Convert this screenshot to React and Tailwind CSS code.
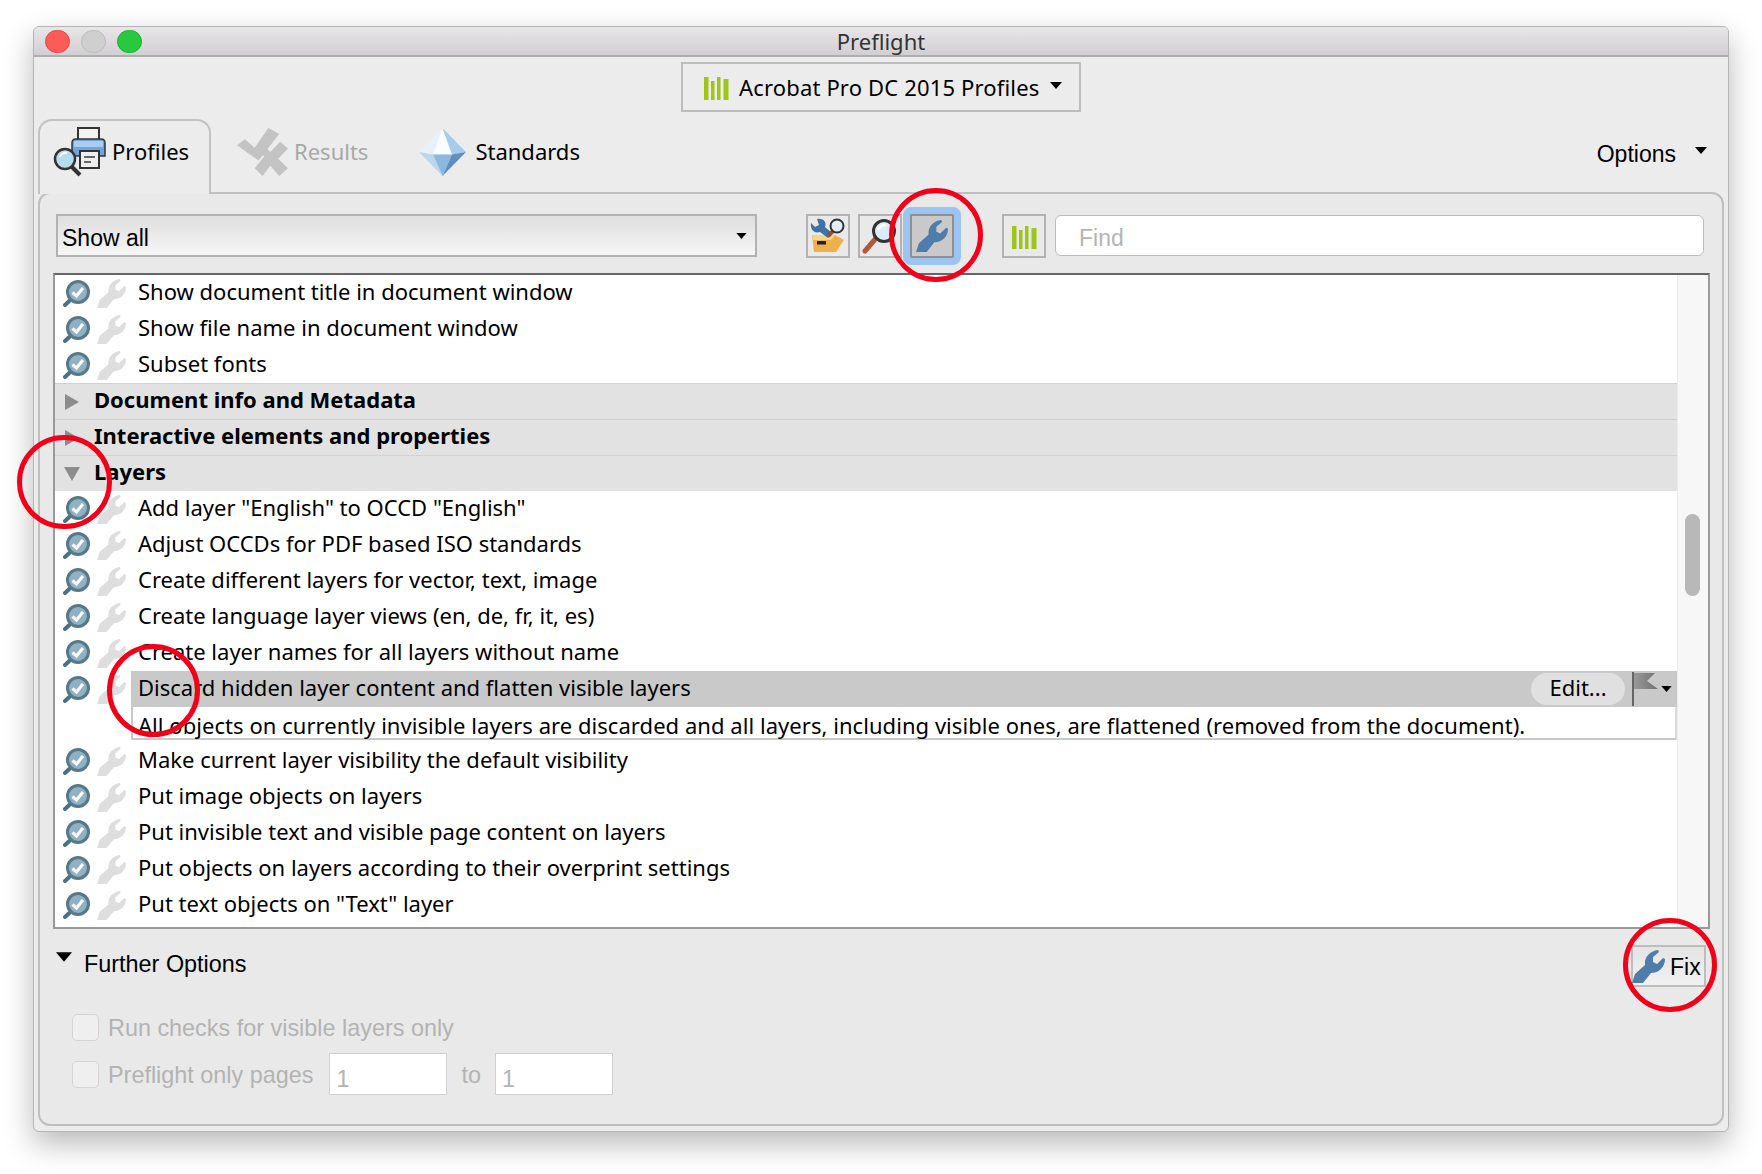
import React from 'react';

const WRENCH = 'M0 33 L3 24 L13 15 C12 7 18 1 26 0 L27 2 L21 7 L21 12 L25 14 L31 8 L33 9 C33 17 27 23 19 23 L11 33 Z';

const Wrench = ({ className, fill }) => (
  <svg viewBox="0 0 33 33" className={className}><path d={WRENCH} fill={fill} /></svg>
);

const Caret = ({ className }) => (
  <svg viewBox="0 0 12 7" className={className}><path d="M0 0 H12 L6 7 Z" fill="#000" /></svg>
);

const CheckGlass = () => (
  <svg viewBox="0 0 27 27" className="w-[27px] h-[27px] shrink-0">
    <path d="M2 25 L8.5 19" stroke="#4a7186" strokeWidth="4" strokeLinecap="round" />
    <circle cx="15" cy="12" r="10.5" fill="#8fb1c3" stroke="#567888" strokeWidth="3" />
    <path d="M9.5 12.5 L13.5 16 L20 8" fill="none" stroke="#fff" strokeWidth="3" />
  </svg>
);

const Bars = ({ className }) => (
  <svg viewBox="0 0 25 25" className={className} fill="#9fc518">
    <rect x="0" y="2" width="4.5" height="23" />
    <rect x="7" y="6" width="3.5" height="19" />
    <rect x="13" y="2" width="3.5" height="23" />
    <rect x="19.5" y="4" width="5" height="21" />
  </svg>
);

const PrinterIcon = () => (
  <svg viewBox="0 0 54 50" className="w-[54px] h-[50px] shrink-0">
    <rect x="25" y="1" width="21" height="13" fill="#f3f3f3" stroke="#333" strokeWidth="2" />
    <path d="M19 16 Q19 12 23 12 H48 Q52 12 52 16 V29 H19 Z" fill="#6ea6dc" stroke="#333" strokeWidth="1.5" />
    <path d="M21 14 H50 V20 H21 Z" fill="#a9cdf0" />
    <rect x="27" y="24" width="19" height="17" fill="#eee" stroke="#333" strokeWidth="2" />
    <path d="M31 30 H42 M31 35 H38" stroke="#666" strokeWidth="2" />
    <path d="M18 39 L27 48" stroke="#333" strokeWidth="4" />
    <circle cx="12" cy="32" r="10" fill="#b6dcee" stroke="#333" strokeWidth="2.5" />
    <path d="M7 30 Q9 25 14 26" stroke="#fff" strokeWidth="2" fill="none" />
  </svg>
);

const ResultsIcon = () => (
  <svg viewBox="0 0 52 56" preserveAspectRatio="none" className="w-[51px] h-[48px] shrink-0" fill="#c3c3c3">
    <path d="M0 20 L8 13 L18 23 L32 0 L43 7 L22 38 Z" />
    <path d="M18 47 L28 33 L17 25 L26 18 L34 28 L44 16 L52 24 L42 36 L52 47 L43 56 L34 44 L26 56 Z" />
  </svg>
);

const DiamondIcon = () => (
  <svg viewBox="0 0 47 56" preserveAspectRatio="none" className="w-[47px] h-[48px] shrink-0">
    <path d="M23.5 0 L0 28 L14 31 Z" fill="#e8f1fa" />
    <path d="M23.5 0 L14 31 H33 Z" fill="#fafdff" />
    <path d="M23.5 0 L47 28 L33 31 Z" fill="#a8cbeb" />
    <path d="M0 28 L14 31 L23.5 56 Z" fill="#bcd6ee" />
    <path d="M14 31 H33 L23.5 56 Z" fill="#8db7de" />
    <path d="M33 31 L47 28 L23.5 56 Z" fill="#5e8fbd" />
  </svg>
);

const ToolboxIcon = () => (
  <svg viewBox="0 0 36 36" className="w-[36px] h-[36px]">
    <path d="M2 17 L25 17 L34 22 L26 34 H4 Z" fill="#eeb04e" />
    <path d="M2 17 L25 17 L21 22 H3 Z" fill="#f8d488" />
    <path d="M1 5 L5 9 L9 7 L7 1 C14 0 17 5 15 9 L22 15 L18 20 L10 14 C4 16 0 11 1 5 Z" fill="#3f73a6" />
    <rect x="7" y="23" width="9" height="3.5" fill="#222" />
    <path d="M18 18 L25 11" stroke="#9a4f2c" strokeWidth="4" />
    <circle cx="27" cy="8" r="6.5" fill="#e2eef6" stroke="#333" strokeWidth="2" />
  </svg>
);

const GlassIcon = () => (
  <svg viewBox="0 0 36 36" className="w-[36px] h-[36px]">
    <path d="M3 33 L15 19" stroke="#b3593a" strokeWidth="5" strokeLinecap="round" />
    <circle cx="22" cy="13" r="10.5" fill="#d8ebf6" stroke="#333" strokeWidth="3" />
    <path d="M16 12 Q18 7 24 7" fill="none" stroke="#fff" strokeWidth="3" />
  </svg>
);

const Row = ({ label }) => (
  <div className="flex h-[36px] items-center">
    <div className="w-[76px] flex items-center pl-[8px] gap-[7px] shrink-0">
      <CheckGlass />
      <Wrench className="w-[29px] h-[29px] shrink-0" fill="#dedede" />
    </div>
    <span className="pl-[7px] pb-[4px] whitespace-nowrap">{label}</span>
  </div>
);

const Section = ({ label, open }) => (
  <div className="flex h-[36px] items-center bg-[#e2e2e2] border-t border-[#d2d2d2] font-bold">
    <div className="w-[39px] pl-[9px] shrink-0">
      {open ? (
        <svg viewBox="0 0 16 14" className="w-[16px] h-[14px]"><path d="M0 0 H16 L8 14 Z" fill="#8c8c8c" /></svg>
      ) : (
        <svg viewBox="0 0 14 16" className="w-[14px] h-[16px] ml-[1px]"><path d="M0 0 L14 8 L0 16 Z" fill="#8c8c8c" /></svg>
      )}
    </div>
    <span className="pb-[4px] whitespace-nowrap">{label}</span>
  </div>
);

const TOP_ROWS = ['Show document title in document window', 'Show file name in document window', 'Subset fonts'];
const LAYER_ROWS = [
  'Add layer "English" to OCCD "English"',
  'Adjust OCCDs for PDF based ISO standards',
  'Create different layers for vector, text, image',
  'Create language layer views (en, de, fr, it, es)',
  'Create layer names for all layers without name',
];
const AFTER_ROWS = [
  'Make current layer visibility the default visibility',
  'Put image objects on layers',
  'Put invisible text and visible page content on layers',
  'Put objects on layers according to their overprint settings',
  'Put text objects on "Text" layer',
];

const helv = "font-['Liberation_Sans',Arial,sans-serif]";

export default function App() {
  return (
    <div className="relative w-[1762px] h-[1174px] bg-white overflow-hidden pt-[26px] pl-[33px] font-['Noto_Sans',sans-serif] text-[22px] text-black">
      <div className="w-[1696px] h-[1106px] bg-[#ececec] rounded-[6px] border border-[#b4b4b4] shadow-[0_12px_30px_rgba(0,0,0,0.28)] overflow-hidden">
        {/* Title bar */}
        <div className="h-[30px] flex items-center justify-center bg-gradient-to-b from-[#e8e6e8] to-[#d1cfd1] border-b-2 border-[#adadad] relative text-[#333]">
          <div className="absolute left-[11px] top-[3px] flex gap-[11px]">
            <span className="w-[25px] h-[23px] rounded-full bg-[#fc5b57] border border-[#e2463f]" />
            <span className="w-[25px] h-[23px] rounded-full bg-[#cfcfcf] border border-[#bcbcbc]" />
            <span className="w-[25px] h-[23px] rounded-full bg-[#28c93f] border border-[#1eb02f]" />
          </div>
          Preflight
        </div>

        {/* Profile selector */}
        <div className="flex justify-center mt-[5px]">
          <div className="w-[400px] h-[50px] border-2 border-[#bcbcbc] flex items-center pl-[21px] gap-[10px]">
            <Bars className="w-[25px] h-[25px]" />
            <span className="whitespace-nowrap tracking-[0.16px]">Acrobat Pro DC 2015 Profiles</span>
            <Caret className="w-[12px] h-[7px] ml-[1px] mb-[3px]" />
          </div>
        </div>

        {/* Tabs */}
        <div className="relative z-10 flex h-[73px] mt-[7px] pl-[4px]">
          <div className="w-[173px] h-[75px] bg-[#ececec] border-2 border-b-0 border-[#c2c2c2] rounded-t-[14px] flex items-start pl-[13px] pt-[6px] gap-[5px]">
            <PrinterIcon />
            <span className="mt-[8px]">Profiles</span>
          </div>
          <div className="flex items-start pl-[26px] pt-[9px] gap-[6px] text-[#a8a8a8]">
            <ResultsIcon />
            <span className="mt-[7px]">Results</span>
          </div>
          <div className="flex items-start pl-[51px] pt-[9px] gap-[9px]">
            <DiamondIcon />
            <span className="mt-[7px]">Standards</span>
          </div>
          <div className={`ml-auto flex items-start gap-[19px] pr-[21px] pt-[18px] text-[23px] ${helv}`}>
            <span>Options</span>
            <Caret className="w-[12px] h-[7px] mt-[10px]" />
          </div>
        </div>

        {/* Panel */}
        <div className="ml-[4px] w-[1686px] h-[934px] bg-[#e9e9e9] border-2 border-[#bfbfbf] rounded-t-[12px] rounded-b-[12px] pl-[13px] pt-[20px]">
          <div className="flex items-start h-[44px]">
            <div className={`ml-[3px] w-[701px] h-[43px] border-2 border-[#b2b2b2] bg-gradient-to-b from-[#dedede] to-[#f6f6f6] flex items-center justify-between pl-[4px] pr-[8px] pt-[5px] text-[23px] ${helv}`}>
              Show all
              <Caret className="w-[11px] h-[6px] mb-[5px]" />
            </div>
            <div className="ml-[49px] w-[44px] h-[44px] border-2 border-[#b2b2b2] flex items-center justify-center">
              <ToolboxIcon />
            </div>
            <div className="ml-[8px] w-[44px] h-[44px] border-2 border-[#b2b2b2] flex items-center justify-center">
              <GlassIcon />
            </div>
            <div className="ml-[8px] w-[44px] h-[44px] border-2 border-[#8f8f8f] bg-[#c9c9c9] outline-[7px] outline-solid outline-[#9cc4f2] rounded-[1px] flex items-center justify-center">
              <Wrench className="w-[32px] h-[32px]" fill="#4f7dab" />
            </div>
            <div className="ml-[48px] w-[44px] h-[44px] border-2 border-[#b2b2b2] flex items-center justify-center">
              <Bars className="w-[25px] h-[25px]" />
            </div>
            <div className={`ml-[9px] w-[649px] h-[41px] mt-[1px] bg-white border border-[#bcbcbc] rounded-[6px] pl-[23px] pt-[5px] flex items-center text-[23px] text-[#b4b4b4] ${helv}`}>
              Find
            </div>
          </div>

          {/* List */}
          <div className="mt-[15px] w-[1657px] h-[656px] flex bg-white border-2 border-[#9a9a9a] border-t-[#666666] overflow-hidden">
            <div className="flex-1 min-w-0">
              {TOP_ROWS.map((r) => <Row key={r} label={r} />)}
              <Section label="Document info and Metadata" />
              <Section label="Interactive elements and properties" />
              <Section label="Layers" open />
              {LAYER_ROWS.map((r) => <Row key={r} label={r} />)}
              <div className="flex h-[72px]">
                <div className="w-[76px] h-[36px] flex items-center pl-[8px] gap-[7px] shrink-0">
                  <CheckGlass />
                  <Wrench className="w-[29px] h-[29px] shrink-0" fill="#dedede" />
                </div>
                <div className="flex-1 min-w-0">
                  <div className="h-[36px] bg-[#c9c9c9] flex items-center pl-[7px] pr-[1px]">
                    <span className="pb-[4px] whitespace-nowrap">Discard hidden layer content and flatten visible layers</span>
                    <span className="ml-auto w-[94px] h-[32px] pb-[4px] rounded-full bg-[#e0e0e0] flex items-center justify-center">Edit...</span>
                    <span className="ml-[7px] w-[2px] h-[34px] bg-[#666]" />
                    <svg viewBox="0 0 24 18" className="w-[24px] h-[18px] mb-[14px] shrink-0">
                      <defs>
                        <linearGradient id="flag" x1="0" x2="1" y1="0" y2="0">
                          <stop offset="0" stopColor="#999" />
                          <stop offset="1" stopColor="#707070" />
                        </linearGradient>
                      </defs>
                      <path d="M0 0 H21 L13 8 L24 16 H0 Z" fill="url(#flag)" />
                    </svg>
                    <Caret className="w-[11px] h-[6px] ml-[3px] mr-[4px] shrink-0" />
                  </div>
                  <div className="h-[33px] border-2 border-t-0 border-[#c9c9c9] border-r-[#dcdcdc] pl-[5px] pt-[5px] flex items-center whitespace-nowrap tracking-[0.05px]">
                    All objects on currently invisible layers are discarded and all layers, including visible ones, are flattened (removed from the document).
                  </div>
                </div>
              </div>
              {AFTER_ROWS.map((r) => <Row key={r} label={r} />)}
            </div>
            <div className="w-[31px] shrink-0 bg-[#f7f7f7] border-l border-[#ececec] pl-[7px] pt-[239px]">
              <div className="w-[15px] h-[82px] rounded-full bg-[#b8b8b8]" />
            </div>
          </div>

          {/* Further options */}
          <div className="mt-[16px] flex justify-between items-start pr-[16px]">
            <div className={`pl-[3px] flex items-start text-[23.4px] ${helv}`}>
              <Caret className="w-[16px] h-[10px] mt-[7px]" />
              <span className="ml-[12px] mt-[2px]">Further Options</span>
            </div>
            <div className={`w-[75px] h-[42px] border-2 border-[#bdbdbd] bg-gradient-to-b from-[#e4e4e4] to-[#f1f1f1] flex items-center text-[23px] ${helv}`}>
              <Wrench className="w-[33px] h-[33px] -ml-[1px]" fill="#4f7dab" />
              <span className="ml-[5px] pt-[3px]">Fix</span>
            </div>
          </div>
          <div className={`pl-[19px] mt-[27px] text-[23.4px] text-[#b3b3b3] ${helv}`}>
            <div className="flex items-center h-[26px] gap-[9px]">
              <span className="w-[27px] h-[27px] rounded-[5px] border border-[#d4d4d4] bg-[#efefef]" />
              <span className="pt-[4px]">Run checks for visible layers only</span>
            </div>
            <div className="flex items-center h-[42px] mt-[13px] gap-[9px]">
              <span className="w-[27px] h-[27px] rounded-[5px] border border-[#d4d4d4] bg-[#efefef]" />
              <span className="pt-[4px]">Preflight only pages</span>
              <span className="ml-[7px] w-[118px] h-[42px] bg-white border border-[#cfcfcf] pl-[6px] pt-[8px]">1</span>
              <span className="ml-[5px] pt-[4px]">to</span>
              <span className="ml-[5px] w-[118px] h-[42px] bg-white border border-[#cfcfcf] pl-[6px] pt-[8px]">1</span>
            </div>
          </div>
        </div>
      </div>

      {/* Red annotation circles */}
      <span className="absolute left-[889px] top-[188px] w-[94px] h-[94px] rounded-full border-[5px] border-[#f2001a]" />
      <span className="absolute left-[17px] top-[435px] w-[95px] h-[94px] rounded-full border-[5px] border-[#f2001a]" />
      <span className="absolute left-[107px] top-[644px] w-[93px] h-[93px] rounded-full border-[5px] border-[#f2001a]" />
      <span className="absolute left-[1623px] top-[918px] w-[94px] h-[94px] rounded-full border-[5px] border-[#f2001a]" />
    </div>
  );
}
